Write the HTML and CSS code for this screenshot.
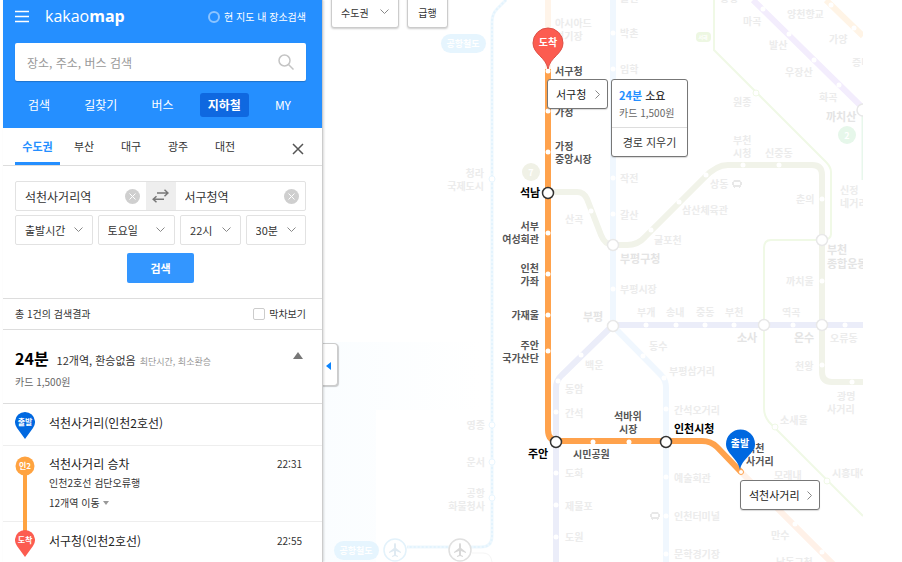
FILE: index.html
```html
<!DOCTYPE html>
<html lang="ko">
<head>
    <meta charset="UTF-8">
    <meta name="viewport" content="width=device-width, initial-scale=1.0">
    <title>카카오맵</title>
    <link rel="stylesheet" href="styles.css">
</head>
<body>
    <aside class="sidebar">
        <header class="header">
            <div class="header-top">
                <button class="icon-button" aria-label="메뉴">
                    <svg width="14" height="13" viewBox="0 0 14 13"><path d="M0 1.5h14M0 6.5h14M0 11.5h14" stroke="#fff" stroke-width="1.5"/></svg>
                </button>
                <h1 class="logo">kakao<b>map</b></h1>
                <label class="here"><input type="checkbox">현 지도 내 장소검색</label>
            </div>
            <form class="search">
                <input type="text" placeholder="장소, 주소, 버스 검색" aria-label="장소, 주소, 버스 검색">
                <button type="button" class="icon-button" aria-label="장소 찾기">
                    <svg width="16" height="16" viewBox="0 0 16 16" fill="none" stroke="#c4c4c4" stroke-width="1.5"><circle cx="6.5" cy="6.5" r="5.5"/><path d="M10.5 10.5l5 5"/></svg>
                </button>
            </form>
            <nav class="menu">
                <a href="#">검색</a>
                <a href="#">길찾기</a>
                <a href="#">버스</a>
                <a href="#" class="on">지하철</a>
                <a href="#">MY</a>
            </nav>
        </header>

        <nav class="cities">
            <a href="#" class="on">수도권</a>
            <a href="#">부산</a>
            <a href="#">대구</a>
            <a href="#">광주</a>
            <a href="#">대전</a>
            <button class="icon-button close" aria-label="닫기">
                <svg width="12" height="12" viewBox="0 0 12 12"><path d="M1 1l10 10M11 1L1 11" stroke="#555" stroke-width="1.5"/></svg>
            </button>
        </nav>

        <form class="route-form">
            <div class="stations">
                <div class="station">
                    <input type="text" value="석천사거리역" aria-label="출발역">
                    <button type="button" class="icon-button" aria-label="출발역 지우기">
                        <svg width="15" height="15" viewBox="0 0 15 15"><circle cx="7.5" cy="7.5" r="7.5" fill="#cfcfcf"/><path d="M4.5 4.5l6 6M10.5 4.5l-6 6" stroke="#fff"/></svg>
                    </button>
                </div>
                <button type="button" class="swap" aria-label="출발 도착 바꾸기">
                    <svg width="17" height="14" viewBox="0 0 17 14" fill="none" stroke="#777" stroke-width="1.5"><path d="M5 4h11M12.500 .8L16 4l-3.500 3.200M12 10.300H1M4.500 7.300L1.200 10.300l3.300 3"/></svg>
                </button>
                <div class="station">
                    <input type="text" value="서구청역" aria-label="도착역">
                    <button type="button" class="icon-button" aria-label="도착역 지우기">
                        <svg width="15" height="15" viewBox="0 0 15 15"><circle cx="7.5" cy="7.5" r="7.5" fill="#cfcfcf"/><path d="M4.5 4.5l6 6M10.5 4.5l-6 6" stroke="#fff"/></svg>
                    </button>
                </div>
            </div>
            <div class="times">
                <select aria-label="시간 기준"><option>출발시간</option></select>
                <select aria-label="요일"><option>토요일</option></select>
                <select aria-label="시"><option>22시</option></select>
                <select aria-label="분"><option>30분</option></select>
            </div>
            <button type="button" class="submit">검색</button>
        </form>

        <div class="count">
            <span>총 1건의 검색결과</span>
            <label><input type="checkbox">막차보기</label>
        </div>

        <section class="summary">
            <div class="summary-line">
                <h2>24분</h2>
                <span class="stops">12개역, 환승없음</span>
                <span class="kind">최단시간, 최소환승</span>
                <button class="icon-button fold" aria-label="접기">
                    <svg width="10" height="7" viewBox="0 0 10 7"><path d="M5 0l5 7H0z" fill="#777"/></svg>
                </button>
            </div>
            <p>카드 1,500원</p>
        </section>

        <ol class="steps">
            <li>
                <svg class="pin" width="20" height="27" viewBox="0 0 20 27"><path d="M10 27L2 16A10 10 0 1 1 18 16z" fill="#0068e0"/><text x="10" y="13">출발</text></svg>
                <div class="step-text"><strong>석천사거리(인천2호선)</strong></div>
            </li>
            <li class="ride">
                <svg class="pin" width="20" height="20" viewBox="0 0 20 20"><circle cx="10" cy="10" r="9.5" fill="#ffa340"/><text x="10" y="13">인2</text></svg>
                <div class="step-text">
                    <strong>석천사거리 승차</strong>
                    <span>인천2호선 검단오류행</span>
                    <button class="more">12개역 이동 <svg width="6" height="4" viewBox="0 0 6 4"><path d="M0 0h6L3 4z" fill="#999"/></svg></button>
                </div>
                <time>22:31</time>
            </li>
            <li>
                <svg class="pin" width="20" height="27" viewBox="0 0 20 27"><path d="M10 27L2 16A10 10 0 1 1 18 16z" fill="#fc5c50"/><text x="10" y="13">도착</text></svg>
                <div class="step-text"><strong>서구청(인천2호선)</strong></div>
                <time>22:55</time>
            </li>
        </ol>
    </aside>

    <main class="map">
        <svg class="lines" viewBox="323 0 540 562">
            <defs>
                <linearGradient id="sea" x1="0" y1="0" x2="1" y2="0">
                    <stop offset="0" stop-color="#fafdff"/>
                    <stop offset="1" stop-color="#fff"/>
                </linearGradient>
            </defs>
            <!-- 바다 -->
            <path d="M323 342H480V410H376V562H323z" fill="url(#sea)"/>

            <!-- 다른 노선 -->
            <g fill="none" stroke-width="6">
                <path d="M506 0L497 9Q492 14 492 22V536Q492 547 481 547H407" stroke="#eef8fe" stroke-width="3"/>
                <path d="M506 0L497 9Q492 14 492 22V536Q492 547 481 547H407" stroke="#e3f3fd" stroke-width="2" stroke-dasharray="2 2"/>
                <path d="M472 553H483Q491 553 492 562" stroke="#f5f5f5" stroke-width="1"/>
                <path d="M548 0V70" stroke="#fff4e9"/>
                <path d="M741 472L835 566" stroke="#fff1e8"/>
                <path d="M613 0V326L661 375Q666 380 666 388V562" stroke="#f0f7fe"/>
                <path d="M548 192H577Q584 192 587 199L601 235Q605 245 613 245H627Q638 245 645 237L704 178Q716 165 728 165H812Q822 165 822 175V372Q822 382 832 382H863" stroke="#f1f3e9"/>
                <path d="M714 0V50L826 162Q831 167 831 172V234Q831 240 822 240H771Q764 240 764 248V408Q764 416 769 422L863 516" stroke="#f0f9e6" stroke-width="2"/>
                <path d="M556 562V388Q556 380 562 375L609 329Q613 325 619 325H863" stroke="#ebedf9"/>
                <path d="M753 0L863 108" stroke="#f3edfd"/>
                <path d="M826 0L863 36" stroke="#fff4e6"/>
                <path d="M863 115V180" stroke="#e8f7ec" stroke-width="3"/>
            </g>

            <g fill="#fff">
                <circle cx="613" cy="33" r="2.5"/><circle cx="613" cy="69" r="2.5"/><circle cx="613" cy="178" r="2.5"/><circle cx="613" cy="214" r="2.5"/><circle cx="613" cy="289" r="2.5"/>
                <circle cx="643" cy="356" r="2.5"/><circle cx="664" cy="378" r="2.5"/><circle cx="666" cy="409" r="2.5"/><circle cx="666" cy="477" r="2.5"/><circle cx="666" cy="516" r="2.5"/><circle cx="666" cy="554" r="2.5"/>
                <circle cx="591" cy="211" r="2.5"/><circle cx="651" cy="230" r="2.5"/><circle cx="679" cy="202" r="2.5"/><circle cx="706" cy="175" r="2.5"/><circle cx="743" cy="165" r="2.5"/><circle cx="779" cy="165" r="2.5"/><circle cx="822" cy="199" r="2.5"/><circle cx="822" cy="281" r="2.5"/><circle cx="822" cy="365" r="2.5"/><circle cx="852" cy="382" r="2.5"/>
                <circle cx="646" cy="325" r="2.5"/><circle cx="676" cy="325" r="2.5"/><circle cx="705" cy="325" r="2.5"/><circle cx="734" cy="325" r="2.5"/><circle cx="793" cy="325" r="2.5"/><circle cx="845" cy="325" r="2.5"/>
                <circle cx="581" cy="355" r="2.5"/><circle cx="558" cy="381" r="2.5"/><circle cx="556" cy="412" r="2.5"/><circle cx="556" cy="473" r="2.5"/><circle cx="556" cy="505" r="2.5"/><circle cx="556" cy="537" r="2.5"/>
                <circle cx="763" cy="9" r="2.5"/><circle cx="789" cy="34" r="2.5"/><circle cx="814" cy="60" r="2.5"/><circle cx="839" cy="85" r="2.5"/><circle cx="831" cy="5" r="2.5"/><circle cx="854" cy="28" r="2.5"/>
                <circle cx="795" cy="524" r="2.5"/><circle cx="822" cy="552" r="2.5"/>
            </g>
            <g fill="#fff" stroke="#e9f6fe">
                <circle cx="492" cy="179" r="3"/><circle cx="492" cy="425" r="3"/><circle cx="492" cy="462" r="3"/><circle cx="492" cy="498" r="3"/>
            </g>
            <g fill="#fff" stroke="#f0f9e6">
                <circle cx="756" cy="93" r="3"/><circle cx="775" cy="427" r="3"/><circle cx="827" cy="481" r="3"/>
            </g>
            <g fill="#fff" stroke="#e8e8e8" stroke-width="1.5">
                <circle cx="613" cy="245" r="5.5"/><circle cx="613" cy="326" r="5.5"/><circle cx="764" cy="325" r="5.5"/><circle cx="822" cy="325" r="5.5"/><circle cx="822" cy="240" r="5.5"/><path d="M863 104a6 6 0 0 0 0 12"/>
            </g>

            <!-- 노선 이름표 -->
            <g class="badge">
                <rect x="441" y="34" width="45" height="19" rx="9.5" fill="#e6f5fe"/><text x="463" y="47">공항철도</text>
                <rect x="334" y="541" width="45" height="19" rx="9.5" fill="#e6f5fe"/><text x="356" y="554">공항철도</text>
                <circle cx="531" cy="172" r="9" fill="#f0f1e6"/><text x="531" y="176">7</text>
                <circle cx="847" cy="135" r="9" fill="#e6f7ea"/><text x="847" y="139">2</text>
                <rect x="696" y="32" width="15" height="10" rx="4" fill="#edf7e2"/><text class="tiny" x="703" y="39">서해</text>
            </g>

            <!-- 공항 -->
            <g fill="#fff" stroke-width="1.5">
                <circle cx="395" cy="550" r="11" stroke="#e3f2fb"/>
                <circle cx="460" cy="550" r="11" stroke="#e0e0e0"/>
            </g>
            <path d="M395 543q1 0 1 2v3l5 4v1l-5-2v4l2 1v1l-3-1-3 1v-1l2-1v-4l-5 2v-1l5-4v-3q0-2 1-2z" fill="#dfeaf2"/>
            <path d="M460 543q1 0 1 2v3l5 4v1l-5-2v4l2 1v1l-3-1-3 1v-1l2-1v-4l-5 2v-1l5-4v-3q0-2 1-2z" fill="#d8d8d8"/>

            <!-- 버스 터미널 표시 -->
            <g fill="#e8e8e8" fill-rule="evenodd">
                <path d="M734 180h6l1 2h1v3h-1v2h-1v1h-1v-1h-4v1h-1v-1h-1v-2h-1v-3h1zM734 182v3h6v-3z"/>
                <path d="M652 512h6l1 2h1v3h-1v2h-1v1h-1v-1h-4v1h-1v-1h-1v-2h-1v-3h1zM652 514v3h6v-3z"/>
            </g>

            <g class="dim">
                <text x="555" y="27">아시아드</text><text x="555" y="40">경기장</text>
                <text x="620" y="2">귤현</text><text x="620" y="37">박촌</text><text x="620" y="73">임학</text><text x="620" y="182">작전</text><text x="620" y="219">갈산</text><text x="620" y="293">부평시장</text>
                <text x="720" y="2">공항</text><text x="743" y="25">마곡</text><text x="787" y="18">양천향교</text><text x="769" y="49">발산</text><text x="829" y="43">가양</text><text x="852" y="66">증미</text><text x="785" y="76">우장산</text><text x="819" y="101">화곡</text><text x="733" y="106">원종</text>
                <text x="733" y="144">부천</text><text x="733" y="157">시청</text><text x="765" y="157">신중동</text><text x="710" y="188">상동</text><text x="840" y="194">신정</text><text x="840" y="207">네거리</text><text x="796" y="203">춘의</text>
                <text x="682" y="214">삼산체육관</text><text x="654" y="244">굴포천</text><text x="565" y="223">산곡</text><text x="786" y="285">까치울</text>
                <text x="637" y="316">부개</text><text x="666" y="316">송내</text><text x="696" y="316">중동</text><text x="725" y="316">부천</text><text x="782" y="316">역곡</text><text x="830" y="342">오류동</text>
                <text x="649" y="350">동수</text><text x="585" y="369">백운</text><text x="669" y="375">부평삼거리</text><text x="795" y="370">천왕</text>
                <text x="837" y="400">광명</text><text x="827" y="413">사거리</text><text x="780" y="424">소새울</text><text x="832" y="477">시흥대야</text><text x="774" y="479">모래내</text><text x="771" y="539">만수</text><text x="776" y="566">남동구청</text>
                <text x="565" y="393">동암</text><text x="565" y="417">간석</text><text x="565" y="477">도화</text><text x="565" y="510">제물포</text><text x="565" y="541">도원</text>
                <text x="674" y="414">간석오거리</text><text x="674" y="482">예술회관</text><text x="674" y="520">인천터미널</text><text x="674" y="558">문학경기장</text>
                <g class="end"><text x="484" y="177">청라</text><text x="484" y="190">국제도시</text><text x="485" y="429">영종</text><text x="485" y="466">운서</text><text x="485" y="497">공항</text><text x="485" y="510">화물청사</text></g>
            </g>
            <g class="dim big">
                <text x="826" y="121">까치산</text><text x="620" y="263">부평구청</text><text x="583" y="321">부평</text><text x="737" y="342">소사</text><text x="794" y="342">온수</text><text x="827" y="254">부천</text><text x="827" y="268">종합운동장</text>
            </g>

            <!-- 경로 -->
            <path d="M548 69V430Q548 441 559 441H702Q711 441 717 447L741 472" fill="none" stroke="#ffa24c" stroke-width="6"/>
            <g fill="#fff">
                <circle cx="548" cy="71" r="2.5"/><circle cx="548" cy="111" r="2.5"/><circle cx="548" cy="152" r="2.5"/><circle cx="548" cy="233" r="2.5"/><circle cx="548" cy="274" r="2.5"/><circle cx="548" cy="315" r="2.5"/><circle cx="548" cy="351" r="2.5"/>
                <circle cx="593" cy="442" r="2.5"/><circle cx="629" cy="442" r="2.5"/><circle cx="741" cy="472" r="2.5" stroke="#ffa24c"/>
            </g>
            <g fill="#fff" stroke="#333" stroke-width="1.5">
                <circle cx="548" cy="193" r="5.5"/><circle cx="556" cy="442" r="5.5"/><circle cx="666" cy="442" r="5.5"/>
            </g>
            <g class="stop">
                <text x="555" y="75">서구청</text><text x="555" y="116">가정</text><text x="555" y="150">가정</text><text x="555" y="163">중앙시장</text>
                <text x="573" y="458">시민공원</text><text x="614" y="420">석바위</text><text x="619" y="433">시장</text><text x="746" y="452">석천</text><text x="746" y="465">사거리</text>
                <g class="end"><text x="539" y="230">서부</text><text x="539" y="243">여성회관</text><text x="539" y="272">인천</text><text x="539" y="285">가좌</text><text x="539" y="319">가재울</text><text x="539" y="349">주안</text><text x="539" y="362">국가산단</text></g>
            </g>
            <g class="transfer">
                <text x="520" y="197">석남</text><text x="528" y="458">주안</text><text x="674" y="433">인천시청</text>
            </g>

            <!-- 출발, 도착 -->
            <g class="marker">
                <path d="M548 69C546 57 533 54 533 43a15 15 0 0 1 30 0c0 11-13 14-15 26z" fill="#fc5c50" stroke="#dd5047"/><text x="548" y="46">도착</text>
                <path d="M740 470C738 458 726 454 726 444a14.5 14.5 0 0 1 29 0c0 10-13 14-15 26z" fill="#0068e0"/><text x="740" y="447">출발</text>
            </g>
        </svg>

        <div class="map-tools">
            <select aria-label="지역"><option>수도권</option></select>
            <button>급행</button>
        </div>

        <button class="collapse" aria-label="패널 접기">
            <svg width="5" height="8" viewBox="0 0 5 8"><path d="M5 0v8L0 4z" fill="#0a84ff"/></svg>
        </button>

        <a href="#" class="bubble bubble-end">서구청 <svg width="5" height="9" viewBox="0 0 5 9"><path d="M.5.5l4 4-4 4" fill="none" stroke="#888"/></svg></a>
        <a href="#" class="bubble bubble-start">석천사거리 <svg width="5" height="9" viewBox="0 0 5 9"><path d="M.5.5l4 4-4 4" fill="none" stroke="#888"/></svg></a>
        <div class="info">
            <p><b><em>24분</em> 소요</b>카드 1,500원</p>
            <button>경로 지우기</button>
        </div>
    </main>
</body>
</html>
```
FILE: styles.css
```css
* {
    box-sizing: border-box;
}
body {
    display: flex;
    height: 100vh;
    margin: 0;
    padding-left: 3px;
    overflow: hidden;
    background-color: #fff;
    color: #333;
    font-family: "Noto Sans CJK KR", sans-serif;
    font-size: 10px;
    line-height: 16px;
}
h1, h2, p, ol {
    margin: 0;
    padding: 0;
}
a {
    color: inherit;
    text-decoration: none;
}
svg {
    flex: none;
}
input, select, button {
    font-family: inherit;
    font-size: 11px;
    color: #333;
}
button {
    cursor: pointer;
}
.icon-button {
    display: flex;
    flex: none;
    padding: 0;
    border: none;
    background: none;
}

/* 왼쪽 패널 */
.sidebar {
    flex: none;
    width: 320px;
    border-right: 1px solid #ccc;
    box-shadow: 1px 0 2px rgba(0, 0, 0, 0.15);
    z-index: 1;
}
.header {
    height: 128px;
    padding: 4px 16px 0 12px;
    background-color: #258fff;
    color: #fff;
}
.header-top {
    display: flex;
    align-items: center;
    height: 24px;
}
.logo {
    margin-left: 16px;
    font-family: "Open Sans", sans-serif;
    font-size: 16px;
    font-weight: 400;
    line-height: 24px;
}
.here {
    display: flex;
    align-items: center;
    gap: 4px;
    margin-left: auto;
    padding-top: 2px;
}
.here input {
    appearance: none;
    width: 12px;
    height: 12px;
    margin: 0;
    border: 2px solid #8cc4ff;
    border-radius: 50%;
}
.search {
    display: flex;
    align-items: center;
    height: 38px;
    margin-top: 15px;
    padding: 0 12px;
    border-radius: 2px;
    background-color: #fff;
    box-shadow: 0 1px 1px rgba(0, 0, 0, 0.2);
}
.search input {
    flex: 1;
    min-width: 0;
    padding: 0;
    border: none;
    font-size: 12px;
}
.search input::placeholder {
    color: #999;
}
.menu {
    display: flex;
    justify-content: space-between;
    margin-top: 12px;
    padding: 0 7px 0 5px;
    font-size: 12px;
    line-height: 24px;
}
.menu a {
    padding: 0 8px;
    border-radius: 3px;
}
.menu .on {
    background-color: #0f68e0;
    font-weight: 700;
}
.cities {
    display: flex;
    gap: 9px;
    height: 38px;
    padding: 0 18px 0 12px;
    border-bottom: 1px solid #ddd;
    font-size: 11px;
    line-height: 36px;
}
.cities a {
    width: 38px;
    text-align: center;
}
.cities .on {
    width: 45px;
    margin-right: -4px;
    border-bottom: 3px solid #258fff;
    color: #258fff;
    font-weight: 700;
}
.close {
    align-items: center;
    margin-left: auto;
    padding-top: 4px;
}
.route-form {
    padding: 15px 16px 15px 12px;
    border-bottom: 1px solid #ddd;
}
.stations {
    display: flex;
    height: 30px;
    border: 1px solid #e2e2e2;
    border-radius: 2px;
}
.station {
    display: flex;
    flex: 1;
    align-items: center;
    min-width: 0;
    padding: 0 6px 0 9px;
}
.station input {
    flex: 1;
    min-width: 0;
    padding: 0;
    border: none;
    font-size: 12px;
}
.swap {
    display: flex;
    flex: none;
    align-items: center;
    justify-content: center;
    width: 30px;
    padding: 0;
    border: none;
    background-color: #eee;
}
.times {
    display: grid;
    grid-template-columns: 77fr 77fr 60fr 60fr;
    gap: 5px;
    margin-top: 4px;
}
select {
    appearance: none;
    height: 30px;
    padding: 0 0 0 9px;
    border: 1px solid #e2e2e2;
    border-radius: 2px;
    background: #fff url("data:image/svg+xml,%3Csvg xmlns='http://www.w3.org/2000/svg' width='9' height='6'%3E%3Cpath d='M.5.5l4 4 4-4' fill='none' stroke='%23888'/%3E%3C/svg%3E") no-repeat right 9px center;
}
.submit {
    display: block;
    width: 67px;
    height: 30px;
    margin: 8px auto 0;
    border: none;
    border-radius: 2px;
    background-color: #3396ff;
    color: #fff;
    font-weight: 700;
}
.count {
    display: flex;
    align-items: center;
    justify-content: space-between;
    height: 31px;
    padding: 0 16px 0 12px;
    border-bottom: 1px solid #ddd;
}
.count label {
    display: flex;
    align-items: center;
    gap: 4px;
}
.count input {
    appearance: none;
    width: 12px;
    height: 12px;
    margin: 0;
    border: 1px solid #ccc;
    border-radius: 2px;
}
.summary {
    height: 74px;
    padding: 16px 19px 0 12px;
    border-bottom: 1px solid #ddd;
    color: #666;
}
.summary-line {
    display: flex;
    align-items: baseline;
    line-height: 24px;
}
.summary h2 {
    color: #000;
    font-size: 16px;
}
.stops {
    margin-left: 8px;
    color: #333;
    font-size: 11px;
}
.kind {
    margin-left: 4px;
    color: #999;
    font-size: 9px;
}
.fold {
    align-self: flex-start;
    margin: 6px 0 0 auto;
}

/* 경로 단계 */
.steps {
    list-style: none;
}
.steps li {
    display: flex;
    height: 42px;
    padding: 8px 20px 0 12px;
    border-bottom: 1px solid #eee;
}
.steps .ride {
    position: relative;
    height: 76px;
    padding-top: 10px;
}
.ride::before {
    content: "";
    position: absolute;
    top: 20px;
    left: 20px;
    width: 4px;
    height: 66px;
    background-color: #ffa340;
}
.pin {
    position: relative;
    z-index: 1;
}
.pin text {
    fill: #fff;
    font-size: 8px;
    font-weight: 700;
    text-anchor: middle;
}
.step-text {
    flex: 1;
    margin-left: 14px;
}
.step-text strong {
    display: block;
    color: #222;
    font-size: 12px;
    font-weight: 400;
    line-height: 22px;
}
.ride .step-text strong {
    line-height: 16px;
}
.step-text span {
    display: block;
    margin: 3px 0 4px;
}
.more {
    display: flex;
    align-items: center;
    gap: 3px;
    padding: 0;
    border: none;
    background: none;
    font-size: 10px;
    line-height: 16px;
}
.steps time {
    line-height: 22px;
}
.ride time {
    line-height: 16px;
}

/* 노선도 */
.map {
    position: relative;
    flex: 1;
    overflow: hidden;
}
.lines {
    display: block;
    width: 540px;
    height: 562px;
    font-size: 10px;
}
.dim {
    fill: #ececec;
    font-weight: 700;
}
.big {
    fill: #e4e4e4;
    font-size: 11px;
}
.end {
    text-anchor: end;
}
.stop {
    fill: #555;
    font-weight: 700;
}
.transfer {
    fill: #000;
    font-size: 11px;
    font-weight: 700;
}
.badge text {
    fill: #fff;
    font-size: 9px;
    font-weight: 700;
    text-anchor: middle;
}
.badge .tiny {
    font-size: 5px;
}
.marker text {
    fill: #fff;
    font-weight: 700;
    text-anchor: middle;
}
.map-tools {
    position: absolute;
    top: -4px;
    left: 8px;
    display: flex;
    gap: 8px;
}
.map-tools select, .map-tools button {
    height: 32px;
    border: 1px solid #ccc;
    border-radius: 3px;
    box-shadow: 0 1px 2px rgba(0, 0, 0, 0.2);
    font-size: 10px;
}
.map-tools select {
    width: 68px;
}
.map-tools button {
    width: 41px;
    padding: 0;
    background-color: #fff;
}
.collapse {
    position: absolute;
    top: 343px;
    left: -1px;
    width: 16px;
    height: 43px;
    padding: 0 0 0 4px;
    border: 1px solid #ccc;
    border-left: none;
    border-radius: 0 4px 4px 0;
    background-color: #fff;
    box-shadow: 1px 1px 1px rgba(0, 0, 0, 0.2);
    text-align: left;
}
.bubble {
    position: absolute;
    display: flex;
    align-items: center;
    justify-content: space-between;
    height: 30px;
    padding: 0 7px 0 8px;
    border: 1px solid #777;
    border-radius: 3px;
    background-color: #fff;
    box-shadow: 0 1px 1px rgba(0, 0, 0, 0.15);
    color: #222;
    font-size: 11px;
}
.bubble-end {
    top: 79px;
    left: 224px;
    width: 61px;
}
.bubble-start {
    top: 480px;
    left: 417px;
    width: 80px;
}
.info {
    position: absolute;
    top: 79px;
    left: 288px;
    width: 77px;
    border: 1px solid #777;
    border-radius: 3px;
    background-color: #fff;
    box-shadow: 0 1px 1px rgba(0, 0, 0, 0.15);
}
.info p {
    padding: 7px 0 6px 7px;
    border-bottom: 1px solid #ddd;
    color: #666;
    line-height: 17px;
}
.info b {
    display: block;
    color: #333;
    font-size: 11px;
    font-weight: 500;
}
.info em {
    color: #258fff;
    font-style: normal;
    font-weight: 700;
}
.info button {
    width: 100%;
    height: 28px;
    padding: 0;
    border: none;
    background: none;
}
```
